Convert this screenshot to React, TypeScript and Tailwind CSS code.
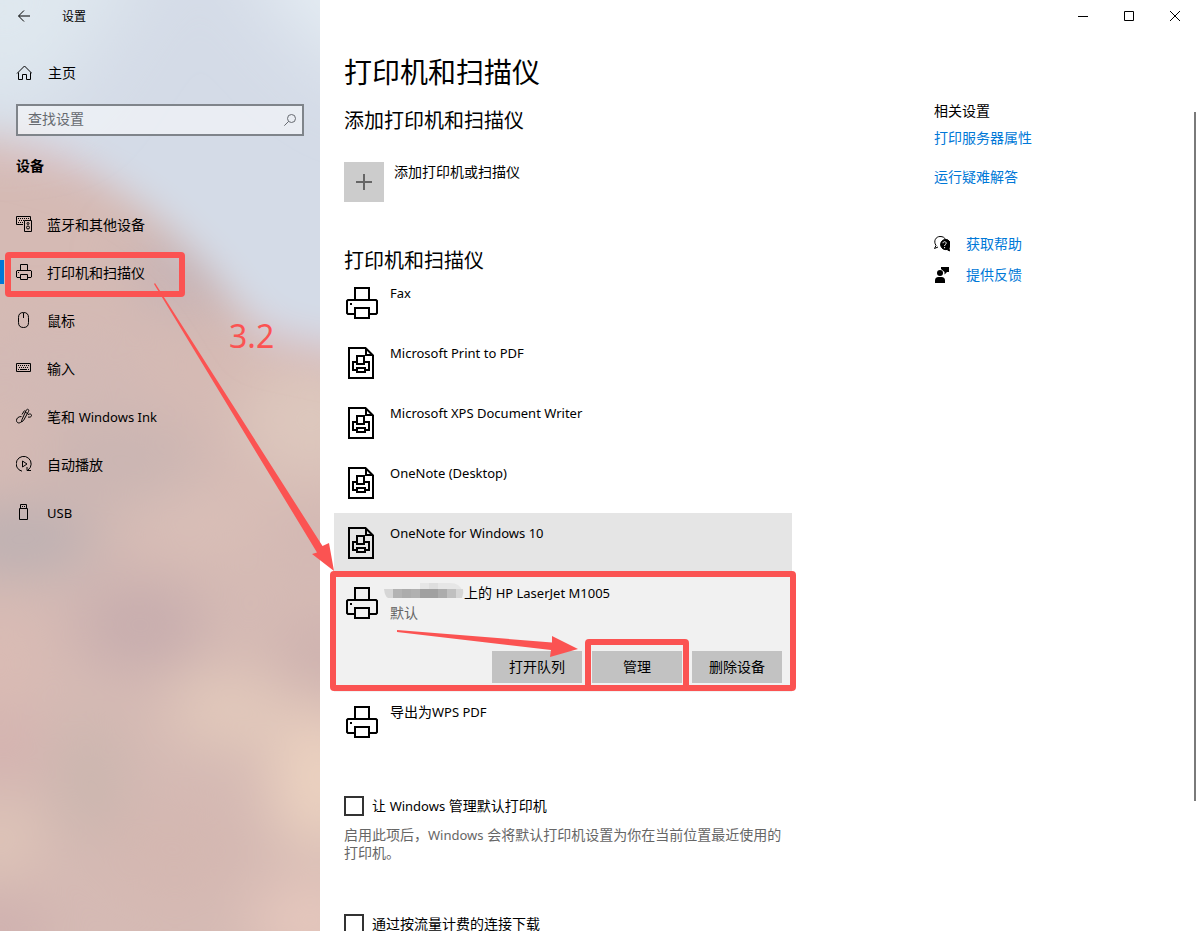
import type { ReactNode } from "react";

type NavItem = { label: ReactNode; icon: ReactNode; active?: boolean };
type Printer = { name: ReactNode; virtual?: boolean; hovered?: boolean };

/* Latin runs are set one pixel smaller than the Chinese text around them */
function Latin({ children }: { children: string }) {
  return <span className="text-[13px]">{children}</span>;
}

function PrinterIcon({ className }: { className: string }) {
  return (
    <svg viewBox="0 0 32 32" className={className} fill="none" stroke="currentColor" strokeWidth="2">
      <path d="M9 13V1h14v12M9 27H2l-1-1V14l1-1h28l1 1v12l-1 1h-7" />
      <path d="M9 21h14v10H9z" />
      <path d="M4 17h2" />
    </svg>
  );
}

function DocPrinterIcon({ className }: { className: string }) {
  return (
    <svg viewBox="-2 0 32 32" className={className} fill="none" stroke="currentColor" strokeWidth="2">
      <path d="M1 1h16.500l7.500 7.500V31H1z" />
      <path d="M18 1v7h7" />
      <path d="M9 9h7v8H9z" />
      <path d="M9 15H5v8h4M16 15h5v8h-4" />
      <path d="M9 21h8v4H9z" />
    </svg>
  );
}

function BluetoothIcon() {
  return (
    <svg viewBox="0 0 16 16" className="size-4" fill="none" stroke="currentColor">
      <path d="M7 8.500H.500v-8h14V4" />
      <path d="M2 2.500h11" strokeDasharray="1 1" />
      <path d="M3 4.500h5M2 6.500h5" strokeDasharray="1 1" />
      <path d="M8.500 4.500h7v11h-7z" />
      <circle cx="12" cy="11.500" r="1.500" />
      <circle cx="12" cy="7.500" r="1" />
    </svg>
  );
}

function MouseIcon() {
  return (
    <svg viewBox="0 0 16 16" className="size-4" fill="none" stroke="currentColor">
      <path d="M2.500 5.500q0-5 5-5t5 5v5q0 5-5 5t-5-5zM7.500 1v5" />
    </svg>
  );
}

function KeyboardIcon() {
  return (
    <svg viewBox="0 0 16 16" className="size-4" fill="none" stroke="currentColor">
      <path d="M.500 3.500h14v8H.500z" />
      <path d="M2 5.500h11M3 7.500h10" strokeDasharray="1 1" />
      <path d="M2 9.500h1M4 9.500h7M12 9.500h1" />
    </svg>
  );
}

function PenIcon() {
  return (
    <svg viewBox="0 0 16 16" className="size-4" fill="none" stroke="currentColor">
      <path d="M6 11.500 5.500 14l2-1.500 5-9c1-2-1-3-2.200-1.500zM9 4l2.500 1.500M8.500 2.500 6 6.500" />
      <path d="M5.500 8.500C2 8.500.500 10.500.500 12.500c0 2.500 3 3.500 5 1M12 6.500c2-1 3.500-.500 3.500 1s-2 2-3.500 1.500" />
    </svg>
  );
}

function AutoplayIcon() {
  return (
    <svg viewBox="0 0 16 16" className="size-4" fill="none" stroke="currentColor">
      <path d="M6 15.200A7.500 7.500 0 1 1 12 14M15 14.500h-4V11" />
      <path d="M6.500 5v6l4.500-3z" />
    </svg>
  );
}

function UsbIcon() {
  return (
    <svg viewBox="0 0 16 16" className="size-4" fill="none" stroke="currentColor">
      <path d="M3.500 4.500h8v11h-8zM4.500 4.500v-4h6v4M6 2.500h1M8 2.500h1" />
    </svg>
  );
}

const navItems: NavItem[] = [
  { label: "蓝牙和其他设备", icon: <BluetoothIcon /> },
  { label: "打印机和扫描仪", icon: <PrinterIcon className="size-4" />, active: true },
  { label: "鼠标", icon: <MouseIcon /> },
  { label: "输入", icon: <KeyboardIcon /> },
  { label: <>笔和 <Latin>Windows Ink</Latin></>, icon: <PenIcon /> },
  { label: "自动播放", icon: <AutoplayIcon /> },
  { label: <Latin>USB</Latin>, icon: <UsbIcon /> },
];

const printers: Printer[] = [
  { name: "Fax" },
  { name: "Microsoft Print to PDF", virtual: true },
  { name: "Microsoft XPS Document Writer", virtual: true },
  { name: "OneNote (Desktop)", virtual: true },
  { name: "OneNote for Windows 10", virtual: true, hovered: true },
];

/* Soft acrylic wallpaper behind the navigation */
function Wallpaper() {
  return (
    <svg
      viewBox="0 0 320 931"
      preserveAspectRatio="none"
      aria-hidden="true"
      className="absolute inset-0 -z-10 h-full w-full"
    >
      <defs>
        <filter id="soft" filterUnits="userSpaceOnUse" x="-200" y="0" width="720" height="1131">
          <feGaussianBlur stdDeviation="28" />
        </filter>
        <filter id="edge" filterUnits="userSpaceOnUse" x="-200" y="-200" width="720" height="700">
          <feGaussianBlur stdDeviation="18" />
        </filter>
        <filter id="haze" filterUnits="userSpaceOnUse" x="-200" y="-200" width="720" height="700">
          <feGaussianBlur stdDeviation="40" />
        </filter>
      </defs>
      <rect width="320" height="931" fill="#d5bab4" />
      <g filter="url(#soft)">
        <ellipse cx="190" cy="270" rx="60" ry="40" fill="#c6b3b5" />
        <ellipse cx="60" cy="370" rx="90" ry="40" fill="#d2b9b5" />
        <ellipse cx="120" cy="460" rx="80" ry="45" fill="#cab5b2" />
        <ellipse cx="20" cy="540" rx="80" ry="35" fill="#bcb0b2" />
        <ellipse cx="310" cy="420" rx="70" ry="60" fill="#ddc7bd" />
        <ellipse cx="200" cy="520" rx="70" ry="25" fill="#dac0b8" />
        <ellipse cx="310" cy="540" rx="30" ry="30" fill="#d2b8b4" />
        <ellipse cx="140" cy="625" rx="65" ry="45" fill="#c7adae" />
        <ellipse cx="320" cy="655" rx="40" ry="30" fill="#ccb0ae" />
        <ellipse cx="0" cy="660" rx="40" ry="50" fill="#dabbb4" />
        <ellipse cx="0" cy="745" rx="40" ry="30" fill="#d4b1af" />
        <ellipse cx="90" cy="780" rx="35" ry="60" fill="#cbb6af" />
        <ellipse cx="230" cy="710" rx="60" ry="35" fill="#e3cabc" />
        <ellipse cx="320" cy="780" rx="50" ry="70" fill="#ebd1c0" />
        <ellipse cx="0" cy="840" rx="40" ry="30" fill="#e1c7b9" />
        <ellipse cx="175" cy="850" rx="70" ry="50" fill="#d4b7b1" />
        <ellipse cx="310" cy="920" rx="60" ry="40" fill="#e6c8bd" />
        <ellipse cx="0" cy="931" rx="50" ry="30" fill="#ceafae" />
      </g>
      <g filter="url(#edge)">
        <path d="M-60 145Q70 165 130 200T225 290 260 345 400 375V310L220 250 60 140z" fill="#d8c3c9" />
        <path d="M-80-80H400V345Q270 345 235 300T160 220 70 155-80 125z" fill="#d4dbe7" />
      </g>
      <g filter="url(#haze)">
        <path d="M-80-80H170Q90 50 60 90T-80 90z" fill="#dfe8ef" />
        <path d="M230-80H400V90Q300 60 230-80z" fill="#e6eef4" />
      </g>
    </svg>
  );
}

function Sidebar() {
  return (
    <aside className="relative isolate flex w-80 shrink-0 flex-col overflow-hidden">
      <Wallpaper />
      <header className="flex h-8 items-center">
        <button type="button" aria-label="返回" className="grid h-8 w-12 place-items-center">
          <svg viewBox="0 0 12 12" className="size-3" fill="none" stroke="currentColor">
            <path d="M12 6H.800M6 .500.500 6 6 11.500" />
          </svg>
        </button>
        <span className="ml-3.5 pt-0.5 text-xs">设置</span>
      </header>

      <a href="#home" className="mt-4 flex h-12 items-center gap-4 px-4 pt-0.5">
        <svg viewBox="0 0 16 16" className="size-4" fill="none" stroke="currentColor">
          <path d="M1 8.500 8.500 1 16 8.500M2.500 7.500v7h4v-5h4v5h4v-7" />
        </svg>
        <span>主页</span>
      </a>

      <div className="relative mx-4 mt-2">
        <input
          type="search"
          aria-label="查找设置"
          placeholder="查找设置"
          className="h-8 w-full border-2 border-[#7f848a] bg-white/50 pr-8 pb-1 pl-2.5 placeholder:text-[#666a70]"
        />
        <svg
          viewBox="0 0 12 12"
          className="absolute top-2.5 right-2 size-3 text-[#666a70]"
          fill="none"
          stroke="currentColor"
        >
          <circle cx="7.500" cy="4.500" r="4" />
          <path d="M4.700 7.300.300 11.700" />
        </svg>
      </div>

      <h2 className="mt-5 px-4 leading-5 font-bold">设备</h2>

      <nav className="mt-6">
        {navItems.map((item, i) => (
          <a key={i} href="#devices" className="relative flex h-12 items-center gap-[15px] px-4">
            {item.active && <span className="absolute top-3 left-0 h-6 w-1 bg-[#0078d7]" />}
            {item.icon}
            <span className="pt-0.5">{item.label}</span>
            {item.active && (
              <span className="absolute top-1 left-[5px] h-[45px] w-45 rounded-sm border-6 border-[#fb5352]" />
            )}
          </a>
        ))}
      </nav>
    </aside>
  );
}

function WindowControls() {
  return (
    <header className="flex h-8 shrink-0 justify-end">
      <button type="button" aria-label="最小化" className="grid w-[46px] place-items-center">
        <svg viewBox="0 0 10 10" className="size-2.5" stroke="currentColor">
          <path d="M0 5.500h10" />
        </svg>
      </button>
      <button type="button" aria-label="最大化" className="grid w-[46px] place-items-center">
        <svg viewBox="0 0 10 10" className="size-2.5" fill="none" stroke="currentColor">
          <path d="M.500.500h9v9h-9z" />
        </svg>
      </button>
      <button type="button" aria-label="关闭" className="grid w-[46px] place-items-center">
        <svg viewBox="0 0 10 10" className="size-2.5" stroke="currentColor">
          <path d="m0 0 10 10M10 0 0 10" />
        </svg>
      </button>
    </header>
  );
}

/* Pixelated cover over the computer name */
function Mosaic() {
  return (
    <svg viewBox="0 0 80 20" aria-hidden="true" className="-ml-1.5 h-5 w-20">
      <path d="M36 0h30q10 0 12 8h-42z" fill="#e6e6e6" />
      <path d="M45 0h9v8h-9z" fill="#dedede" />
      <path d="M0 6h9v9H4q-3-1-4-9z" fill="#d6d6d6" />
      <path d="M9 6h9v9H9z" fill="#b3b3b3" />
      <path d="M18 6h9v9h-9z" fill="#acacac" />
      <path d="M27 6h9v9h-9z" fill="#b0b0b0" />
      <path d="M36 6h18v9H36z" fill="#a0a0a0" />
      <path d="M54 6h9v9h-9z" fill="#acacac" />
      <path d="M63 6h9v9h-9z" fill="#c0c0c0" />
      <path d="M72 6h7q1 4-1 9h-6z" fill="#d6d6d6" />
    </svg>
  );
}

function PrinterRow({ name, virtual, hovered }: Printer) {
  return (
    <li className={`flex h-15 gap-3 px-3 ${hovered ? "bg-[#e5e5e5]" : ""}`}>
      {virtual ? (
        <DocPrinterIcon className="mt-3.5 size-8 shrink-0" />
      ) : (
        <PrinterIcon className="mt-3.5 size-8 shrink-0" />
      )}
      <span className="mt-2.5 text-[13px] leading-5">{name}</span>
    </li>
  );
}

function SelectedPrinter() {
  return (
    <li className="relative bg-[#f1f1f1] px-3 pt-2.5 pb-[9px]">
      <div className="flex gap-3">
        <PrinterIcon className="mt-1 size-8 shrink-0" />
        <div className="leading-5">
          <div className="flex">
            <Mosaic />
            <span>
              上的 <Latin>HP LaserJet M1005</Latin>
            </span>
          </div>
          <div className="text-[#666]">默认</div>
        </div>
      </div>
      <div className="mt-7 -mr-0.5 flex justify-end gap-2.5">
        <button type="button" className="h-8 w-[90px] bg-[#c2c2c2]">
          打开队列
        </button>
        <button type="button" className="relative h-8 w-[90px] bg-[#c2c2c2]">
          管理
          <span className="absolute -inset-x-[7px] -top-3 -bottom-2 z-10 rounded-sm border-6 border-[#fb5352]" />
        </button>
        <button type="button" className="h-8 w-[90px] bg-[#c2c2c2]">
          删除设备
        </button>
      </div>
      <span className="pointer-events-none absolute -inset-x-1 -top-0.5 bottom-px rounded-sm border-6 border-[#fb5352]" />
    </li>
  );
}

function CheckOption({ id, children }: { id: string; children: ReactNode }) {
  return (
    <div className="flex items-center gap-2">
      <input id={id} type="checkbox" className="size-5 appearance-none border-2 border-[#333]" />
      <label htmlFor={id} className="leading-5">
        {children}
      </label>
    </div>
  );
}

function RelatedSettings() {
  return (
    <section className="flex flex-col items-start pt-[69px] leading-5">
      <h2>相关设置</h2>
      <a href="#server" className="mt-[7px] text-[#0078d7]">
        打印服务器属性
      </a>
      <a href="#troubleshoot" className="mt-[19px] text-[#0078d7]">
        运行疑难解答
      </a>
      <a href="#help" className="mt-[47px] flex items-center gap-4 text-[#0078d7]">
        <svg viewBox="0 0 16 16" className="size-4 text-black" fill="none" stroke="currentColor">
          <path d="M4 11 .500 12.500 2 9.500C-1 5 2 .500 6 .500c3 0 4.500 1 5.500 3" />
          <path
            d="M10.500 3.500a5 5 0 1 0 2.500 10l2.500 1.500-.500-3A5 5 0 0 0 10.500 3.500z"
            fill="currentColor"
          />
          <path d="M9 7.200c0-2 3.200-2 3.200 0 0 1.300-1.600 1.200-1.600 2.800M10.600 11v1.200" stroke="white" />
        </svg>
        获取帮助
      </a>
      <a href="#feedback" className="mt-[11px] flex items-center gap-4 text-[#0078d7]">
        <svg viewBox="0 0 16 16" className="size-4 text-black" fill="currentColor">
          <circle cx="6" cy="6" r="3" />
          <path d="M1 16v-2.500q0-3.500 3.500-3.500h3q3.500 0 3.500 3.500V16zM7 0h8v5h-2l-2.500 2.500V5L7 2z" />
        </svg>
        提供反馈
      </a>
    </section>
  );
}

/* Red tutorial marks that run across the window */
function Annotations() {
  return (
    <div aria-hidden="true" className="pointer-events-none absolute inset-0 z-20 text-[#fb5352]">
      <svg className="absolute inset-0 h-full w-full" fill="currentColor">
        <path d="M155 283 322.500 546 329 543 334 571 312 554 317 552.500 154 284z" />
        <path d="M397 630 552 642.500V636L578 649 550 657 551 650 397 632z" />
      </svg>
      <span className="absolute top-[316px] left-[229px] text-[32px] leading-10">3.2</span>
    </div>
  );
}

export default function App() {
  return (
    <div className="relative flex h-screen overflow-hidden bg-white font-['Noto_Sans','Noto_Sans_CJK_SC',sans-serif] text-sm text-black">
      <Sidebar />

      <div className="flex min-w-0 flex-1 flex-col">
        <WindowControls />
        <div className="flex min-h-0 flex-1 gap-[142px] pl-3.5">
          <main className="w-[458px] pt-5">
            <h1 className="px-2.5 text-[28px] leading-10">打印机和扫描仪</h1>

            <h2 className="mt-[17px] px-2.5 text-xl leading-6">添加打印机和扫描仪</h2>
            <button type="button" className="mx-2.5 mt-[29px] flex gap-2.5 text-left">
              <span className="grid size-10 place-items-center bg-[#ccc]">
                <svg viewBox="0 0 16 16" className="size-4 text-[#666]" stroke="currentColor" strokeWidth="2">
                  <path d="M8 0v16M0 8h16" />
                </svg>
              </span>
              <span className="leading-5">添加打印机或扫描仪</span>
            </button>

            <h2 className="mt-[47px] px-2.5 text-xl leading-6">打印机和扫描仪</h2>
            <ul>
              {printers.map((printer, i) => (
                <PrinterRow key={i} {...printer} />
              ))}
              <SelectedPrinter />
              <PrinterRow
                name={
                  <>
                    <span className="text-sm leading-5">导出为</span>WPS PDF
                  </>
                }
              />
            </ul>

            <div className="mt-11 pl-2.5">
              <CheckOption id="default-printer">
                让 <Latin>Windows</Latin> 管理默认打印机
              </CheckOption>
              <p className="mt-2.5 leading-[18px] text-[#666]">
                启用此项后，<Latin>Windows</Latin> 会将默认打印机设置为你在当前位置最近使用的打印机。
              </p>
            </div>
            <div className="mt-[52px] px-2.5">
              <CheckOption id="metered">通过按流量计费的连接下载</CheckOption>
            </div>
          </main>

          <RelatedSettings />
          <div className="mt-20 mr-0.5 ml-auto h-[689px] w-0.5 bg-[#7a7a7a]" />
        </div>
      </div>

      <Annotations />
    </div>
  );
}
